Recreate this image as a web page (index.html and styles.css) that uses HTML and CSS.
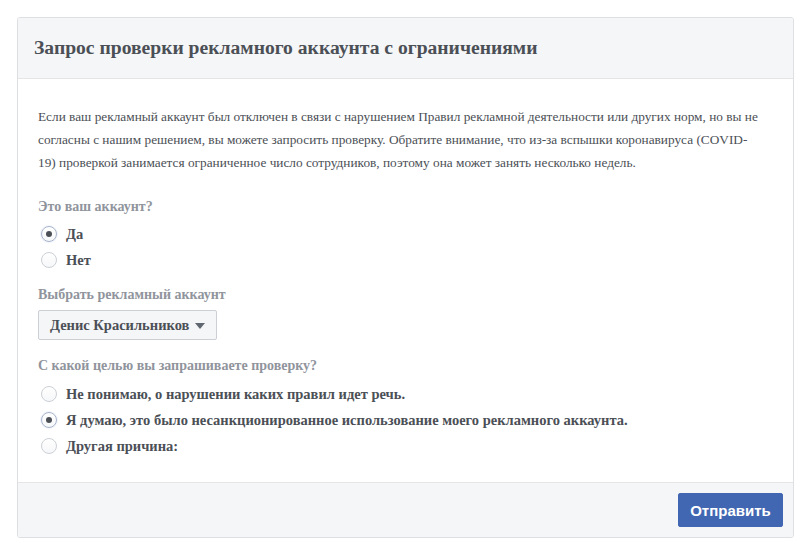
FILE: index.html
```html
<!DOCTYPE html>
<html lang="ru">
<head>
<meta charset="utf-8">
<title>Запрос проверки</title>
<link rel="stylesheet" href="styles.css">
</head>
<body>
<div class="card">
  <div class="card-header">
    <h1 class="title">Запрос проверки рекламного аккаунта с ограничениями</h1>
  </div>
  <div class="card-body">
    <p class="intro">Если ваш рекламный аккаунт был отключен в связи с нарушением Правил рекламной деятельности или других норм, но вы не согласны с нашим решением, вы можете запросить проверку. Обратите внимание, что из-за вспышки коронавируса (COVID-19) проверкой занимается ограниченное число сотрудников, поэтому она может занять несколько недель.</p>

    <div class="section first">
      <div class="label">Это ваш аккаунт?</div>
      <div class="radio-list">
        <div class="radio-row"><span class="radio checked"></span><span class="radio-text">Да</span></div>
        <div class="radio-row"><span class="radio"></span><span class="radio-text">Нет</span></div>
      </div>
    </div>

    <div class="section second">
      <div class="label">Выбрать рекламный аккаунт</div>
      <div class="select">Денис Красильников <span class="caret"></span></div>
    </div>

    <div class="section third">
      <div class="label">С какой целью вы запрашиваете проверку?</div>
      <div class="radio-list">
        <div class="radio-row"><span class="radio"></span><span class="radio-text">Не понимаю, о нарушении каких правил идет речь.</span></div>
        <div class="radio-row"><span class="radio checked"></span><span class="radio-text">Я думаю, это было несанкционированное использование моего рекламного аккаунта.</span></div>
        <div class="radio-row"><span class="radio"></span><span class="radio-text">Другая причина:</span></div>
      </div>
    </div>
  </div>
  <div class="card-footer">
    <button class="btn-primary">Отправить</button>
  </div>
</div>
</body>
</html>
```
FILE: styles.css
```css
html, body {
  margin: 0;
  padding: 0;
  background: #ffffff;
}
body {
  padding: 17px 13px 13px 17px;
  font-family: "Liberation Serif", "Times New Roman", serif;
  color: #4b4f56;
}
.card {
  width: 777px;
  box-sizing: border-box;
  border: 1px solid #dddfe2;
  border-radius: 3px;
  background: #fff;
  overflow: hidden;
}
.card-header {
  height: 60px;
  background: #f5f6f7;
  border-bottom: 1px solid #e5e5e5;
  display: flex;
  align-items: center;
  padding-left: 16px;
}
.title {
  margin: 0;
  font-size: 19.6px;
  font-weight: bold;
  color: #4b4f56;
  line-height: 26px;
}
.card-body {
  padding: 26px 20px 24px 20px;
  height: 403px;
  box-sizing: border-box;
}
.intro {
  margin: 0;
  max-width: 722px;
  font-size: 13.3px;
  line-height: 23px;
  color: #4b4f56;
}
.label {
  font-size: 14px;
  font-weight: bold;
  line-height: 20px;
  color: #90949c;
}
.section.first { margin-top: 23px; }
.section.second { margin-top: 12px; }
.section.third { margin-top: 16px; }
.first .radio-list { margin-top: 4px; }
.third .radio-list { margin-top: 5px; }
.radio-row {
  display: flex;
  align-items: center;
  height: 26px;
}
.radio {
  width: 16px;
  height: 16px;
  box-sizing: border-box;
  border-radius: 50%;
  border: 1px solid #ccd0d5;
  background: linear-gradient(#ffffff, #f6f7f9);
  margin-left: 3px;
  margin-right: 9px;
  display: flex;
  align-items: center;
  justify-content: center;
  flex: none;
}
.radio.checked {
  border-color: #a8b4cc;
  box-shadow: 0 0 0 1px rgba(66, 103, 178, 0.08);
}
.radio.checked::after {
  content: "";
  width: 6px;
  height: 6px;
  border-radius: 50%;
  background: #4b4f56;
}
.radio-text {
  font-size: 14.5px;
  font-weight: bold;
  color: #4b4f56;
}
.select {
  margin-top: 5px;
  display: inline-flex;
  align-items: center;
  height: 30px;
  box-sizing: border-box;
  padding: 0 11px 0 11px;
  background: #f5f6f7;
  border: 1px solid #ccd0d5;
  border-radius: 2px;
  font-size: 14.5px;
  font-weight: bold;
  color: #4b4f56;
}
.caret {
  width: 0;
  height: 0;
  border-left: 5px solid transparent;
  border-right: 5px solid transparent;
  border-top: 6px solid #606770;
  margin-left: 6px;
  margin-top: 1px;
}
.card-footer {
  height: 55px;
  box-sizing: border-box;
  background: #f5f6f7;
  border-top: 1px solid #e5e5e5;
  display: flex;
  justify-content: flex-end;
  align-items: center;
  padding-right: 10px;
}
.btn-primary {
  height: 34px;
  width: 105px;
  border: 1px solid #4267b2;
  border-radius: 2px;
  background: #4267b2;
  color: #fff;
  font-family: "Liberation Sans", Arial, sans-serif;
  font-size: 15px;
  font-weight: bold;
  padding: 0;
}
```
